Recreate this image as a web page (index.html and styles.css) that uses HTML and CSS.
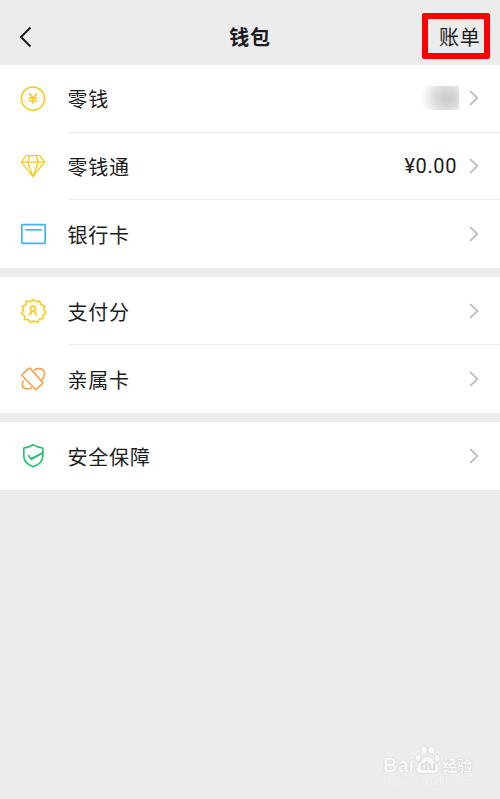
FILE: index.html
```html
<!DOCTYPE html>
<html lang="zh-CN">
<head>
    <meta charset="UTF-8">
    <meta name="viewport" content="width=device-width, initial-scale=1.0">
    <title>钱包</title>
    <link rel="stylesheet" href="styles.css">
</head>
<body>

    <header class="navbar">
        <a class="back" href="#" aria-label="返回">
            <svg width="14" height="22" viewBox="0 0 14 22"><path d="M11.5 1.5 2 11l9.5 9.5"/></svg>
        </a>
        <h1>钱包</h1>
        <a class="bill" href="#">账单</a>
    </header>

    <!-- Balance and cards -->
    <section class="group">
        <div class="row">
            <svg class="icon yellow" viewBox="0 0 28 28">
                <circle cx="14" cy="13.6" r="11.6"/>
                <path d="M10.2 8.4 14 13l3.8-4.6M14 13v5.8M9.6 13.1h8.8M9.6 16h8.8"/>
            </svg>
            <div class="cell">
                <span class="label">零钱</span>
                <span class="masked"></span>
                <svg class="arrow" viewBox="0 0 10 16"><path d="M1 1l7.4 7L1 15"/></svg>
            </div>
        </div>
        <div class="row">
            <svg class="icon yellow thin" viewBox="0 0 28 28">
                <path d="M6.8 3.6h14.4l4.3 6.6L14 24.6 2.5 10.2zM2.5 10.2h23M10.8 3.6 8.7 10.2 14 24.6l5.3-14.4-2.1-6.6"/>
            </svg>
            <div class="cell">
                <span class="label">零钱通</span>
                <span class="amount">¥0.00</span>
                <svg class="arrow" viewBox="0 0 10 16"><path d="M1 1l7.4 7L1 15"/></svg>
            </div>
        </div>
        <div class="row">
            <svg class="icon blue" viewBox="0 0 28 28">
                <rect x="2.8" y="4.6" width="23.4" height="18.8" rx="0.8"/>
                <path d="M6.2 9.8h16.6"/>
            </svg>
            <div class="cell">
                <span class="label">银行卡</span>
                <svg class="arrow" viewBox="0 0 10 16"><path d="M1 1l7.4 7L1 15"/></svg>
            </div>
        </div>
    </section>

    <!-- Pay score and family card -->
    <section class="group">
        <div class="row">
            <svg class="icon yellow" viewBox="0 0 28 28">
                <path d="M14 2.3l3 2.4 3.8-.6 1.2 3.6 3.6 1.4-.8 3.7 2 3.1-2.8 2.4.1 3.4-3.7.3-2 3.4-3.5-1.4-3.4 1.6-2.3-3-3.8-.2.1-3.8-3-2.4 2-3.1-1.1-3.7 3.6-1.5L7.2 4.1l3.8.6z"/>
                <circle cx="14" cy="11.6" r="2.5"/>
                <path d="M10.2 18.5c.4-1.4 1.1-2.2 2.1-2.8l.5-2M17.8 18.5c-.4-1.4-1.1-2.2-2.1-2.8l-.5-2"/>
            </svg>
            <div class="cell">
                <span class="label">支付分</span>
                <svg class="arrow" viewBox="0 0 10 16"><path d="M1 1l7.4 7L1 15"/></svg>
            </div>
        </div>
        <div class="row">
            <svg class="icon orange" viewBox="0 0 28 28">
                <path d="M9.8 3.3q.8-.7 1.5.1l12.200 13.700q.7.8-.1 1.500l-5.900 5.500q-.8.7-1.500-.1L3.200 10.800q-.7-.8.1-1.500z"/>
                <path d="M15.300 5c3.500-1.900 7.600-1.900 9.200.3 1.800 2.600.8 6.700-2.200 10.500M4.500 15.300c-1.900 3.500-1.600 6.700.9 8 2.200 1 5 .5 8-1.200"/>
            </svg>
            <div class="cell">
                <span class="label">亲属卡</span>
                <svg class="arrow" viewBox="0 0 10 16"><path d="M1 1l7.4 7L1 15"/></svg>
            </div>
        </div>
    </section>

    <!-- Security -->
    <section class="group">
        <div class="row">
            <svg class="icon green" viewBox="0 0 28 28">
                <path d="M23.800 10.800V6Q18.500 5.600 14.200 2.700 9.500 5.600 4.800 6v8c0 5.200 3.700 8.700 9.400 10.800 5.900-2.100 9.600-5.600 9.600-10.800v-3.200"/>
                <path d="M9.600 13.700l2.400 3 11.800-5.900-11.500 6.500z"/>
            </svg>
            <div class="cell">
                <span class="label">安全保障</span>
                <svg class="arrow" viewBox="0 0 10 16"><path d="M1 1l7.4 7L1 15"/></svg>
            </div>
        </div>
    </section>

    <div class="watermark">
        <div class="brand">
            <span>Bai</span>
            <span class="paw">
                <svg width="27" height="30" viewBox="0 0 28 31">
                    <ellipse cx="4.2" cy="13.5" rx="3" ry="4"/>
                    <ellipse cx="10.3" cy="5.5" rx="3.3" ry="4.5"/>
                    <ellipse cx="18.2" cy="5.5" rx="3.3" ry="4.5"/>
                    <ellipse cx="24" cy="13.5" rx="3" ry="4"/>
                    <path d="M14 11.5c4 0 5.5 4 8 6.5 3 3 5 5.5 3.500 9-1.500 3.300-5 2.500-11.500 2.500S4 30.300 2.500 27C1 23.500 3 21 6 18c2.500-2.500 4-6.500 8-6.500z"/>
                </svg>
                <span class="du">du</span>
            </span>
            <span class="cn">经验</span>
        </div>
        <div class="site">jingyan.baidu.com</div>
    </div>

</body>
</html>
```
FILE: styles.css
```css
* {
    box-sizing: border-box;
}

body {
    margin: 0;
    min-height: 799px;
    position: relative;
    background: #ececec;
    color: #1c1c1c;
    font-family: "Noto Sans CJK SC", sans-serif;
    font-size: 20px;
    letter-spacing: 0.8px;
}

svg {
    display: block;
    fill: none;
    stroke: currentColor;
    stroke-linejoin: round;
}

a {
    color: inherit;
    text-decoration: none;
}

/* Top bar */
.navbar {
    display: grid;
    grid-template-columns: 1fr auto 1fr;
    align-items: center;
    height: 65px;
    padding: 9px 10px 0;
}

.navbar h1 {
    margin: 0;
    font-size: 20px;
    font-weight: 700;
    line-height: 30px;
}

.back {
    padding-left: 9px;
}

.back svg {
    stroke-width: 2;
}

.bill {
    justify-self: end;
    width: 68px;
    height: 46px;
    margin-top: -2px;
    padding-left: 11px;
    border: 6px solid #fe0000;
    border-radius: 2px;
    line-height: 36px;
}

/* List */
.group {
    margin-bottom: 9.5px;
    background: #fff;
}

.row {
    display: flex;
    align-items: center;
    height: 67.67px;
    padding-left: 19px;
}

.icon {
    width: 28px;
    height: 28px;
    margin-right: 20.5px;
    stroke-width: 1.6;
}

.thin {
    stroke-width: 1.3;
}

.cell {
    display: flex;
    flex: 1;
    align-items: center;
    height: 100%;
    padding-right: 21px;
    border-bottom: 1px solid #ececec;
}

.row:last-child .cell {
    border-bottom: none;
}

.label {
    flex: 1;
    padding-top: 1px;
}

.amount {
    margin-right: 12px;
    padding-top: 1px;
    font-family: Roboto, sans-serif;
    letter-spacing: 0.6px;
}

.masked {
    width: 40px;
    height: 24px;
    margin-right: 10px;
    background: radial-gradient(ellipse 27px 24px at 28px 12px, #c9c9c9, #dcdcdc 45%, #fff);
}

.arrow {
    width: 10px;
    height: 16px;
    color: #b5b5b5;
    stroke-width: 1.7;
}

.yellow {
    color: #f8cb16;
}

.blue {
    color: #32b9ed;
}

.orange {
    color: #f5a34f;
}

.green {
    color: #1fc16d;
}

/* Watermark */
.watermark {
    position: absolute;
    left: 383px;
    top: 745px;
    color: #f8f8f8;
    letter-spacing: 0;
    text-shadow: 0 0 1px #c6c6c6, 0 0 1px #c6c6c6;
}

.brand {
    display: flex;
    align-items: flex-end;
    height: 30px;
    font-family: "Liberation Sans", sans-serif;
    font-size: 20px;
    font-weight: 700;
    line-height: 20px;
}

.paw {
    position: relative;
}

.paw svg {
    fill: #f8f8f8;
    stroke: #d4d4d4;
    stroke-width: 0.7;
}

.du {
    position: absolute;
    left: 6px;
    bottom: 2px;
    color: #dadada;
    font-size: 13px;
    line-height: 14px;
    text-shadow: none;
}

.cn {
    margin-left: 1px;
    font-family: "Noto Sans CJK SC", sans-serif;
    font-size: 15px;
}

.site {
    color: #f6f6f6;
    font-family: "Liberation Sans", sans-serif;
    font-size: 11px;
    line-height: 13px;
    text-shadow: 0 0 1px #dcdcdc;
}
```
